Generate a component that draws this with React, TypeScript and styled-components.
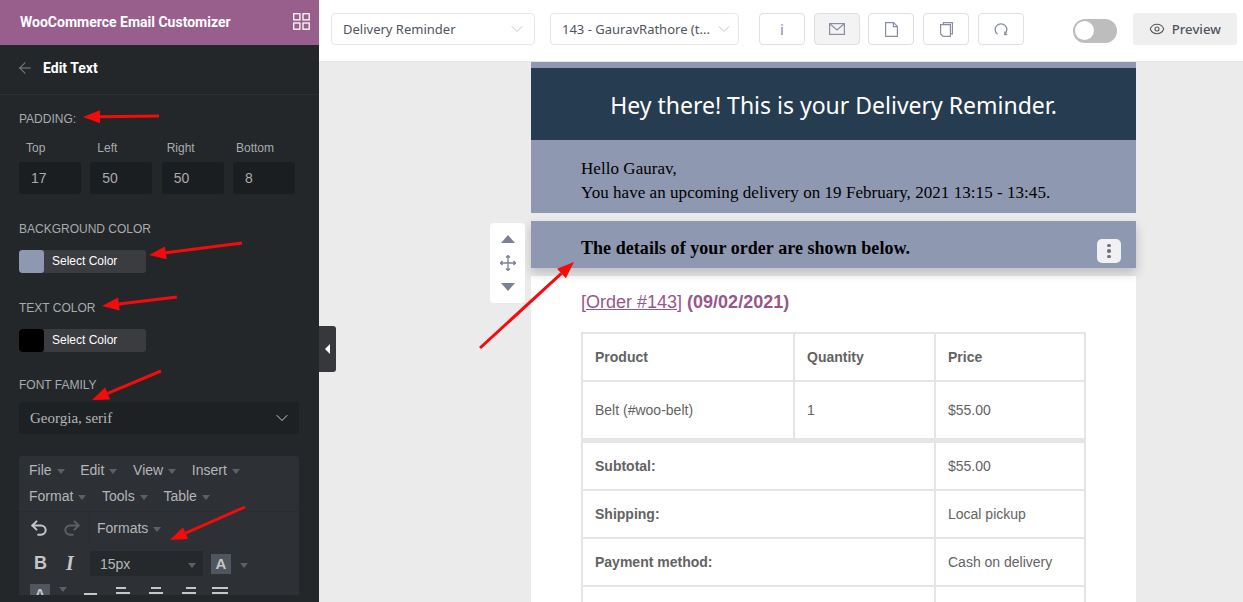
import React from 'react';
import styled, { createGlobalStyle } from 'styled-components';
import { ArrowLeft, ChevronDown, Eye, Undo2, Redo2 } from 'lucide-react';

const GlobalStyle = createGlobalStyle`
    html, body { margin: 0; padding: 0; height: 100%; background: #ebebeb; }
    * { box-sizing: border-box; }
`;

// tail + tip of each red annotation arrow
const arrows = [
    [159, 116, 83, 117],
    [242, 243, 149, 255],
    [177, 297, 102, 306],
    [161, 371, 92, 400],
    [245, 507, 170, 540],
    [480, 348, 574, 262],
];

function RedArrow({ a }: { a: number[] }) {
    const [x1, y1, x2, y2] = a;
    const len = Math.hypot(x2 - x1, y2 - y1);
    const ux = (x2 - x1) / len;
    const uy = (y2 - y1) / len;
    const bx = x2 - ux * 17;
    const by = y2 - uy * 17;
    const head = `${x2},${y2} ${bx - uy * 6.5},${by + ux * 6.5} ${bx + uy * 6.5},${by - ux * 6.5}`;
    return (<g>
        <line x1={x1} y1={y1} x2={bx} y2={by} stroke="#f40b0b" strokeWidth="3" />
        <polygon points={head} fill="#f40b0b" />
    </g>);
}

const Caret = () => <MiniCaret />;

const paddingFields = [
    { name: 'Top', value: '17', indent: 7 },
    { name: 'Left', value: '50', indent: 7 },
    { name: 'Right', value: '50', indent: 5 },
    { name: 'Bottom', value: '8', indent: 3 },
];

export default function App() {
    return (<Page>
        <GlobalStyle />
        <Sidebar>
            <BrandBar>
                <BrandName>WooCommerce Email Customizer</BrandName>
                <svg width="17" height="17" viewBox="0 0 17 17" fill="none" stroke="#fff" strokeWidth="1.3">
                    <rect x="0.7" y="0.7" width="6.2" height="6.2" />
                    <rect x="10" y="0.7" width="6.2" height="6.2" />
                    <rect x="0.7" y="10" width="6.2" height="6.2" />
                    <rect x="10" y="10" width="6.2" height="6.2" />
                </svg>
            </BrandBar>
            <BackRow>
                <ArrowLeft size={18} color="#85888a" strokeWidth={1.4} />
                <BackTitle>Edit Text</BackTitle>
            </BackRow>
            <Form>
                <SectionLabel>Padding:</SectionLabel>
                <PaddingGrid>
                    {paddingFields.map((f) => (
                        <PaddingField key={f.name}>
                            <PaddingName $indent={f.indent}>{f.name}</PaddingName>
                            <PaddingValue>{f.value}</PaddingValue>
                        </PaddingField>
                    ))}
                </PaddingGrid>
                <SectionLabel $top={28}>Background Color</SectionLabel>
                <ColorButton>
                    <Swatch $color="#8f98b1" />
                    <span>Select Color</span>
                </ColorButton>
                <SectionLabel $top={28}>Text Color</SectionLabel>
                <ColorButton>
                    <Swatch $color="#000" />
                    <span>Select Color</span>
                </ColorButton>
                <SectionLabel $top={26}>Font Family</SectionLabel>
                <FontSelect>
                    <span>Georgia, serif</span>
                    <ChevronDown size={20} color="#c9cacb" strokeWidth={1.2} />
                </FontSelect>
                <Editor>
                    <MenuRow>
                        <MenuItem>File<Caret /></MenuItem>
                        <MenuItem>Edit<Caret /></MenuItem>
                        <MenuItem>View<Caret /></MenuItem>
                        <MenuItem>Insert<Caret /></MenuItem>
                    </MenuRow>
                    <MenuRow>
                        <MenuItem>Format<Caret /></MenuItem>
                        <MenuItem>Tools<Caret /></MenuItem>
                        <MenuItem>Table<Caret /></MenuItem>
                    </MenuRow>
                    <ToolRow>
                        <Undo2 size={20} color="#c4c6c7" strokeWidth={2.4} />
                        <Redo2 size={20} color="#5d6062" strokeWidth={2.4} />
                        <ToolDivider />
                        <MenuItem>Formats<Caret /></MenuItem>
                    </ToolRow>
                    <FormatRow>
                        <BoldGlyph>B</BoldGlyph>
                        <ItalicGlyph>I</ItalicGlyph>
                        <SizeSelect>15px<Caret /></SizeSelect>
                        <ColorGlyph>A</ColorGlyph>
                        <Caret />
                    </FormatRow>
                    <AlignRow>
                        <ColorGlyph>A</ColorGlyph>
                        <Caret />
                        <AlignDash />
                        <AlignIcon $lines={[14, 10]} $align="flex-start" />
                        <AlignIcon $lines={[14, 10]} $align="center" />
                        <AlignIcon $lines={[14, 10]} $align="flex-end" />
                        <AlignIcon $lines={[16, 16]} $align="center" />
                    </AlignRow>
                </Editor>
            </Form>
        </Sidebar>

        <Main>
            <TopBar>
                <Dropdown $width={204} $right={7}>
                    <DropdownText>Delivery Reminder</DropdownText>
                    <ChevronDown size={20} color="#b9bcc0" strokeWidth={1} />
                </Dropdown>
                <Dropdown $width={189} $left={15} $right={4}>
                    <DropdownText>143 - GauravRathore (t...</DropdownText>
                    <ChevronDown size={20} color="#b9bcc0" strokeWidth={1} />
                </Dropdown>
                <IconGroup>
                    <IconButton><InfoGlyph>i</InfoGlyph></IconButton>
                    <IconButton $active>
                        <svg width="16" height="12" viewBox="0 0 16 12" fill="none" stroke="#8a8ea5" strokeWidth="1.2">
                            <rect x="0.6" y="0.6" width="14.8" height="10.8" />
                            <path d="M1 1l7 6 7-6" />
                        </svg>
                    </IconButton>
                    <IconButton>
                        <svg width="13" height="15" viewBox="0 0 13 15" fill="none" stroke="#8a8ea5" strokeWidth="1.2">
                            <path d="M.6.6h8l3.8 3.8v10H.6z" />
                            <path d="M8.4.6v4h4" />
                        </svg>
                    </IconButton>
                    <IconButton>
                        <svg width="13" height="15" viewBox="0 0 13 15" fill="none" stroke="#8a8ea5" strokeWidth="1.2">
                            <path d="M3.4 2.4V.6h9v11.2h-2" />
                            <path d="M.6 2.6h9.8v11.8H3L.6 12z" />
                        </svg>
                    </IconButton>
                    <IconButton>
                        <svg width="14" height="14" viewBox="0 0 14 14" fill="none" stroke="#8a8ea5" strokeWidth="1.3">
                            <path d="M3.5 12.2A5.8 5.8 0 1 1 10.5 12.2" />
                            <path d="M10.8 9.6v3h2.4" />
                        </svg>
                    </IconButton>
                </IconGroup>
                <Toggle><ToggleKnob /></Toggle>
                <PreviewButton>
                    <Eye size={16} color="#55585c" strokeWidth={1.6} />
                    Preview
                </PreviewButton>
            </TopBar>

            <Canvas>
                <EmailColumn>
                    <BandTop />
                    <HeroBlock>Hey there! This is your Delivery Reminder.</HeroBlock>
                    <GreetingBlock>
                        <div>Hello Gaurav,</div>
                        <div>You have an upcoming delivery on 19 February, 2021 13:15 - 13:45.</div>
                    </GreetingBlock>
                    <SelectedBlock>
                        The details of your order are shown below.
                        <MoveControl>
                            <MoveArrow $up />
                            <svg width="16" height="16" viewBox="0 0 16 16" fill="none" stroke="#7b8096" strokeWidth="1.3">
                                <path d="M8 .5v15M.5 8h15M6 2.5L8 .5l2 2M6 13.5l2 2 2-2M2.5 6L.5 8l2 2M13.5 6l2 2-2 2" />
                            </svg>
                            <MoveArrow />
                        </MoveControl>
                        <KebabButton>
                            <KebabDot /><KebabDot /><KebabDot />
                        </KebabButton>
                    </SelectedBlock>
                    <OrderBlock>
                        <OrderTitle>
                            [<OrderLink>Order #143</OrderLink>] <strong>(09/02/2021)</strong>
                        </OrderTitle>
                        <OrderTable>
                            <colgroup>
                                <col style={{ width: 212 }} />
                                <col style={{ width: 141 }} />
                                <col />
                            </colgroup>
                            <thead>
                                <tr>
                                    <HeadCell>Product</HeadCell>
                                    <HeadCell>Quantity</HeadCell>
                                    <HeadCell>Price</HeadCell>
                                </tr>
                            </thead>
                            <tbody>
                                <tr>
                                    <BodyCell>Belt (#woo-belt)</BodyCell>
                                    <BodyCell>1</BodyCell>
                                    <BodyCell>$55.00</BodyCell>
                                </tr>
                            </tbody>
                            <tfoot>
                                {[['Subtotal:', '$55.00'], ['Shipping:', 'Local pickup'], ['Payment method:', 'Cash on delivery'], ['', '']].map(([l, v], i) => (
                                    <tr key={i}>
                                        <TotalLabel colSpan={2} $first={i === 0}>{l}</TotalLabel>
                                        <TotalValue $first={i === 0}>{v}</TotalValue>
                                    </tr>
                                ))}
                            </tfoot>
                        </OrderTable>
                    </OrderBlock>
                </EmailColumn>
            </Canvas>
        </Main>

        <CollapseHandle />
        <ArrowLayer width="1243" height="602">
            {arrows.map((a, k) => <RedArrow key={k} a={a} />)}
        </ArrowLayer>
    </Page>);
}

const Page = styled.div`
    position: relative;
    display: flex;
    width: 100%;
    height: 100vh;
    overflow: hidden;
    font-family: "Liberation Sans", Arial, sans-serif;
`;

const ArrowLayer = styled.svg`
    position: absolute;
    left: 0;
    top: 0;
    pointer-events: none;
`;

// ------------------------------------------------------------------------ Sidebar

const Sidebar = styled.aside`
    flex: 0 0 319px;
    height: 100%;
    background: #23272a;
    color: #b4b6b8;
    overflow: hidden;
`;

const BrandBar = styled.div`
    display: flex;
    align-items: center;
    justify-content: space-between;
    height: 45px;
    padding: 0 9px 2px 20px;
    background: #985e8c;
`;

const BrandName = styled.div`
    font-family: Roboto, sans-serif;
    font-size: 14px;
    font-weight: 700;
    color: #fff;
`;

const BackRow = styled.div`
    display: flex;
    align-items: center;
    gap: 9px;
    height: 50px;
    padding: 0 0 4px 16px;
    border-bottom: 1px solid #2c3033;
`;

const BackTitle = styled.div`
    font-family: Roboto, sans-serif;
    font-size: 14px;
    font-weight: 700;
    color: #fff;
`;

const Form = styled.div`
    padding: 17px 20px 0 19px;
`;

const SectionLabel = styled.div<{ $top?: number }>`
    margin-top: ${props => props.$top || 0}px;
    font-size: 12px;
    line-height: 15px;
    text-transform: uppercase;
    color: #a9abad;
`;

const PaddingGrid = styled.div`
    display: grid;
    grid-template-columns: repeat(4, 62px);
    column-gap: 9.33px;
    margin-top: 14px;
`;

const PaddingField = styled.div`
    display: flex;
    flex-direction: column;
`;

const PaddingName = styled.div<{ $indent: number }>`
    padding-left: ${props => props.$indent}px;
    font-size: 12px;
    line-height: 15px;
    color: #a9abad;
`;

const PaddingValue = styled.div`
    height: 32px;
    margin-top: 6px;
    padding-left: 12px;
    border-radius: 3px;
    background: #1b1e20;
    font-size: 14px;
    line-height: 32px;
    color: #a9abad;
`;

const ColorButton = styled.div`
    display: flex;
    align-items: center;
    gap: 8px;
    width: 127px;
    height: 23px;
    margin-top: 13px;
    border-radius: 3px;
    overflow: hidden;
    background: #3a3c3f;
    font-size: 12px;
    color: #fff;
    & > span { margin-bottom: 2px; }
`;

const Swatch = styled.div<{ $color: string }>`
    width: 25px;
    height: 100%;
    border-radius: 3px;
    background: ${props => props.$color};
`;

const FontSelect = styled.div`
    display: flex;
    align-items: center;
    justify-content: space-between;
    width: 280px;
    height: 32px;
    margin-top: 9px;
    padding: 0 7px 0 11px;
    border-radius: 3px;
    background: #1e2123;
    font-family: "Liberation Serif", serif;
    font-size: 15px;
    color: #b4b6b8;
`;

const Editor = styled.div`
    width: 280px;
    height: 139px;
    margin-top: 22px;
    padding-top: 1px;
    border-radius: 3px 3px 0 0;
    overflow: hidden;
    background: #2d3034;
`;

const MenuRow = styled.div`
    display: flex;
    gap: 15.7px;
    height: 26px;
    padding-left: 10px;
    align-items: center;
`;

const MenuItem = styled.div`
    display: flex;
    align-items: center;
    gap: 5px;
    font-size: 14px;
    color: #b4b6b8;
`;

const MiniCaret = styled.span`
    display: inline-block;
    width: 0;
    height: 0;
    margin-top: 3px;
    border-left: 4px solid transparent;
    border-right: 4px solid transparent;
    border-top: 5px solid #5c6065;
`;

const ToolRow = styled.div`
    display: flex;
    align-items: center;
    gap: 13px;
    height: 37px;
    margin-top: 2px;
    padding: 0 0 4px 10px;
    border-top: 1px solid #292c30;
`;

const ToolDivider = styled.div`
    width: 1px;
    height: 100%;
    margin: 0 -6px 0 -6px;
    background: #292c30;
`;

const FormatRow = styled.div`
    display: flex;
    align-items: center;
    height: 31px;
    padding-left: 15px;
`;

const BoldGlyph = styled.div`
    width: 32px;
    font-family: "Liberation Sans", sans-serif;
    font-size: 18px;
    font-weight: 700;
    color: #c4c6c7;
`;

const ItalicGlyph = styled.div`
    width: 24px;
    font-family: "Liberation Serif", serif;
    font-size: 20px;
    font-style: italic;
    font-weight: 700;
    color: #c4c6c7;
`;

const SizeSelect = styled.div`
    display: flex;
    align-items: center;
    justify-content: space-between;
    width: 113px;
    height: 25px;
    margin-right: 8px;
    padding: 0 7px 0 10px;
    background: #26292c;
    font-size: 14px;
    color: #b4b6b8;
`;

const ColorGlyph = styled.div`
    width: 20px;
    height: 20px;
    margin-right: 9px;
    background: #50565e;
    text-align: center;
    font-size: 15px;
    font-weight: 700;
    line-height: 20px;
    color: #c4c6c7;
`;

const AlignRow = styled.div`
    display: flex;
    align-items: flex-start;
    height: 20px;
    padding: 5px 0 0 11px;
`;

const AlignDash = styled.div`
    width: 13px;
    height: 2px;
    margin: 9px 19px 0 17px;
    background: #c4c6c7;
`;

const AlignIcon = styled.div<{ $lines: number[]; $align: string }>`
    display: flex;
    flex-direction: column;
    align-items: ${props => props.$align};
    gap: 3px;
    width: 16px;
    margin: 3px 16px 0 0;
    &::before, &::after {
        content: "";
        height: 2px;
        background: #c4c6c7;
    }
    &::before { width: ${props => props.$lines[1]}px; }
    &::after { width: ${props => props.$lines[0]}px; }
`;

const CollapseHandle = styled.div`
    position: absolute;
    left: 319px;
    top: 326px;
    width: 17px;
    height: 46px;
    border-radius: 0 3px 3px 0;
    background: #36383b;
    &::after {
        content: "";
        position: absolute;
        left: 6px;
        top: 18px;
        border-top: 5px solid transparent;
        border-bottom: 5px solid transparent;
        border-right: 5px solid #fff;
    }
`;

// ------------------------------------------------------------------------ Top bar

const Main = styled.main`
    flex: 1;
    display: flex;
    flex-direction: column;
    min-width: 0;
    height: 100%;
`;

const TopBar = styled.div`
    flex: 0 0 62px;
    display: flex;
    align-items: flex-start;
    padding: 13px 6px 0 12px;
    background: #fff;
    border-bottom: 1px solid #e8e8e8;
    font-family: "Noto Sans", "Open Sans", sans-serif;
`;

const Dropdown = styled.div<{ $width: number; $left?: number; $right: number }>`
    display: flex;
    align-items: center;
    justify-content: space-between;
    width: ${props => props.$width}px;
    height: 32px;
    margin-left: ${props => props.$left || 0}px;
    padding: 0 ${props => props.$right}px 0 11px;
    border: 1px solid #e6e6e6;
    border-radius: 4px;
`;

const DropdownText = styled.span`
    font-size: 13px;
    white-space: nowrap;
    color: #50545e;
`;

const IconGroup = styled.div`
    display: flex;
    gap: 8.7px;
    margin-left: 20px;
`;

const IconButton = styled.div<{ $active?: boolean }>`
    display: flex;
    align-items: center;
    justify-content: center;
    width: 46px;
    height: 32px;
    border: 1px solid #dfdfdf;
    border-radius: 4px;
    background: ${props => props.$active ? '#f3f3f3' : '#fff'};
`;

const InfoGlyph = styled.span`
    font-size: 15px;
    color: #8a8ea5;
`;

const Toggle = styled.div`
    position: relative;
    width: 44px;
    height: 24px;
    margin: 6px 16px 0 49px;
    border-radius: 12px;
    background: #bdbdbd;
`;

const ToggleKnob = styled.div`
    position: absolute;
    left: 2px;
    top: 2px;
    width: 19px;
    height: 19px;
    border-radius: 50%;
    background: #fff;
`;

const PreviewButton = styled.div`
    display: flex;
    align-items: center;
    gap: 7px;
    width: 104px;
    height: 32px;
    padding-left: 16px;
    border-radius: 3px;
    background: #efefef;
    font-size: 13.2px;
    font-weight: 500;
    color: #50545e;
`;

// ------------------------------------------------------------------------ Email preview

const Canvas = styled.div`
    flex: 1;
    min-height: 0;
    overflow: hidden;
    padding-left: 212px;
    background: #ebebeb;
`;

const EmailColumn = styled.div`
    width: 605px;
`;

const BandTop = styled.div`
    height: 6px;
    background: #8f98b1;
`;

const HeroBlock = styled.div`
    display: flex;
    align-items: center;
    justify-content: center;
    height: 72px;
    padding-top: 1px;
    background: #263c50;
    font-family: "Noto Sans", sans-serif;
    font-size: 23px;
    color: #fff;
`;

const GreetingBlock = styled.div`
    height: 73px;
    padding: 17px 50px 0;
    background: #8f98b1;
    font-family: "Liberation Serif", serif;
    font-size: 17px;
    letter-spacing: 0.05px;
    line-height: 24px;
    color: #000;
`;

const SelectedBlock = styled.div`
    position: relative;
    height: 47px;
    margin-top: 8px;
    padding: 17px 50px 0;
    background: #8f98b1;
    box-shadow: 0 5px 10px rgba(0, 0, 0, 0.2);
    font-family: "Liberation Serif", serif;
    font-size: 18px;
    letter-spacing: 0.05px;
    font-weight: 700;
    line-height: 21px;
    color: #000;
`;

const MoveControl = styled.div`
    position: absolute;
    left: -41px;
    top: 2px;
    display: flex;
    flex-direction: column;
    align-items: center;
    justify-content: space-between;
    width: 35px;
    height: 80px;
    padding: 12px 0;
    border-radius: 4px;
    background: #fff;
`;

const MoveArrow = styled.div<{ $up?: boolean }>`
    width: 0;
    height: 0;
    border-left: 7px solid transparent;
    border-right: 7px solid transparent;
    ${props => props.$up ? 'border-bottom: 8px solid #7b8096;' : 'border-top: 8px solid #7b8096;'}
`;

const KebabButton = styled.div`
    position: absolute;
    right: 15px;
    top: 18px;
    display: flex;
    flex-direction: column;
    align-items: center;
    justify-content: center;
    gap: 2px;
    width: 24px;
    height: 24px;
    border-radius: 5px;
    background: #f1f1f3;
`;

const KebabDot = styled.div`
    width: 3.5px;
    height: 3.5px;
    border-radius: 50%;
    background: #6c7186;
`;

const OrderBlock = styled.div`
    margin-top: 8px;
    padding: 15px 50px 0;
    background: #fff;
`;

const OrderTitle = styled.div`
    font-size: 18px;
    line-height: 22px;
    color: #96588a;
`;

const OrderLink = styled.span`
    text-decoration: underline;
`;

const OrderTable = styled.table`
    width: 505px;
    margin-top: 19px;
    border-collapse: collapse;
    table-layout: fixed;
    font-size: 14px;
    color: #636363;
`;

const HeadCell = styled.th`
    height: 48px;
    padding: 0 12px;
    border: 2px solid #e5e5e5;
    text-align: left;
    font-weight: 700;
`;

const BodyCell = styled.td`
    height: 59px;
    padding: 0 12px;
    border: 2px solid #e5e5e5;
`;

const TotalLabel = styled.th<{ $first?: boolean }>`
    height: ${props => props.$first ? 50 : 48}px;
    padding: 0 12px;
    border: 2px solid #e5e5e5;
    ${props => props.$first && 'border-top-width: 5px;'}
    text-align: left;
    font-weight: 700;
`;

const TotalValue = styled.td<{ $first?: boolean }>`
    height: ${props => props.$first ? 50 : 48}px;
    padding: 0 12px;
    border: 2px solid #e5e5e5;
    ${props => props.$first && 'border-top-width: 5px;'}
`;
